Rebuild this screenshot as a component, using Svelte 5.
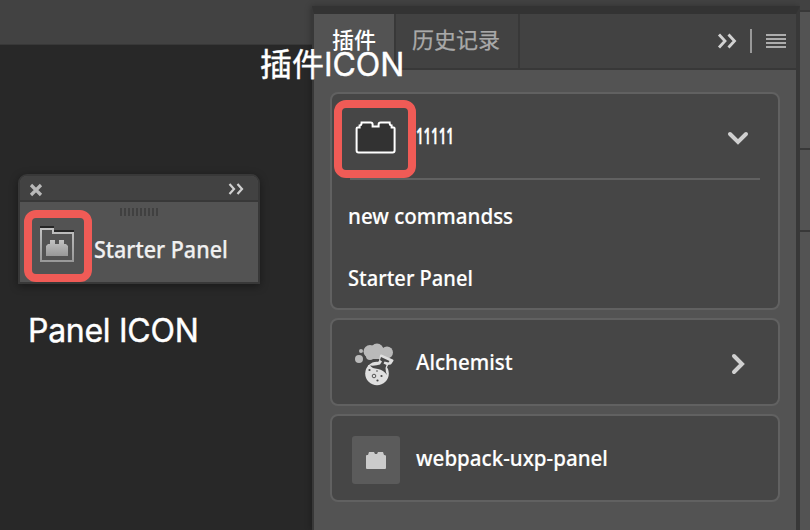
<script>
  const grips = Array.from({ length: 10 });
</script>

<main class="workspace">
  <header class="options-bar"></header>

  <section class="floating">
    <div class="float-head">
      <svg width="14" height="14" viewBox="0 0 14 14"><path d="M2 2l10 10M12 2L2 12" stroke="#b9b9b9" stroke-width="3.2" fill="none" /></svg>
      <svg width="16" height="12" viewBox="0 0 16 12"><path d="M1.5 1l4.5 5-4.500 5M9.500 1l4.500 5-4.500 5" stroke="#d0d0d0" stroke-width="2.200" fill="none" /></svg>
    </div>
    <div class="float-body">
      <div class="grip">{#each grips as _}<i></i>{/each}</div>
      <div class="float-row">
        <svg width="34" height="38" viewBox="0 0 34 38">
          <defs><linearGradient id="metal" x1="0" y1="0" x2="0" y2="1"><stop offset="0" stop-color="#c2c2c2" /><stop offset="1" stop-color="#989898" /></linearGradient></defs>
          <path d="M0 1h14M14 5h20" stroke="#262626" stroke-width="2" />
          <path d="M0 2H14V6H34V36H0ZM2 4V34H32V8H12V4Z" fill="url(#metal)" fill-rule="evenodd" />
          <path d="M6 20l2-2h2v-4h5v4h4v-4h5v4h2l2 2v10H6z" fill="url(#metal)" />
        </svg>
        <span class="float-label">Starter Panel</span>
      </div>
    </div>
  </section>

  <section class="dock">
    <div class="tabs">
      <div class="tab active"><span>插件</span></div>
      <div class="tab history"><span>历史记录</span></div>
      <div class="tools">
        <svg width="20" height="16" viewBox="0 0 20 16"><path d="M2 1.500l6 6.500-6 6.500M11.500 1.500l6 6.500-6 6.500" stroke="#d2d2d2" stroke-width="2.800" fill="none" /></svg>
        <b></b>
        <svg width="20" height="14" viewBox="0 0 20 14"><path d="M0 1h20M0 5h20M0 9h20M0 13h20" stroke="#adadad" stroke-width="2" /></svg>
      </div>
    </div>
    <div class="cards">
      <article class="card expanded">
        <div class="row first">
          <svg class="icon" width="48" height="48" viewBox="0 0 48 48"><path d="M4 11.500q0-1 1-1h2v-2q2 0 2-3h9q2 0 2 2v2h6v-2q0-2 2-2h9q0 3 2 3v2h2q1 0 1 1v22q0 2-2 2H6q-2 0-2-2z" transform="translate(.6 0)" fill="#323232" stroke="#fff" stroke-width="2" /></svg>
          <span class="label ones">11111</span>
          <svg class="arrow" width="24" height="24" viewBox="0 0 24 24"><path d="M4 8l8 8 8-8" /></svg>
        </div>
        <div class="command"><span class="label new">new commandss</span></div>
        <div class="command"><span class="label starter">Starter Panel</span></div>
      </article>
      <article class="card">
        <div class="row">
          <svg class="icon" width="48" height="48" viewBox="0 0 48 48">
            <g fill="#bababa"><circle cx="7" cy="19" r="4" /><circle cx="9" cy="11" r="2" /><circle cx="18" cy="11.500" r="6.500" /><circle cx="25" cy="10" r="6.500" /><circle cx="35" cy="12.500" r="6" /><path d="M12 13h28l-10 6H16z" /><circle cx="18" cy="16" r="4" /></g>
            <circle cx="25" cy="33.500" r="11.800" fill="#dfdfdf" />
            <path d="M29 15.500l11.500 5-2 3-3 .5-3 6-3.500 8-12-12 8-1 3-4z" fill="#dfdfdf" stroke="#dfdfdf" stroke-width="2" stroke-linejoin="round" />
            <path d="M29 17l8.500 4-1 1.500-4-1-1 2 3 1.500-1 3q0 4 1.500 7-3.500-5-9-6-6-.5-8-3.500 6 .500 10-1l2-3-2-1.500z" fill="#464646" />
            <circle cx="22" cy="36" r="1.800" fill="none" stroke="#555" />
            <g fill="#464646"><circle cx="17.500" cy="30" r="1.100" /><circle cx="25" cy="31" r=".8" /><circle cx="29.500" cy="36" r="1.100" /><circle cx="25.500" cy="40.500" r="1.100" /></g>
          </svg>
          <span class="label alchemist">Alchemist</span>
          <svg class="arrow" width="24" height="24" viewBox="0 0 24 24"><path d="M8 4l8 8-8 8" /></svg>
        </div>
      </article>
      <article class="card">
        <div class="row">
          <svg class="icon" width="48" height="48" viewBox="0 0 48 48"><rect width="48" height="48" rx="3" fill="#5b5b5b" /><path d="M14 20q0-1 1-1h1l1-3h5l1 2h2l1-2h5l1 3q2 0 2 1v12q0 1-1 1H15q-1 0-1-1z" fill="#cbcbcb" /></svg>
          <span class="label webpack">webpack-uxp-panel</span>
        </div>
      </article>
    </div>
  </section>

  <aside class="edge"><div class="edge-head"></div><div class="edge-one"></div><div class="edge-two"></div></aside>

  <div class="highlight small"></div>
  <div class="highlight large"></div>
  <span class="note panel-note">Panel ICON</span>
  <span class="note plugin-note">插件<em>ICON</em></span>
</main>

<style>
  :global(body) { margin: 0; }
  .workspace { position: relative; width: 810px; height: 530px; overflow: hidden; background: #282828; font-family: "Noto Sans", "Noto Sans CJK SC", sans-serif; color: #fff; }
  .workspace * { box-sizing: border-box; }
  svg { display: block; flex: none; }
  span { white-space: nowrap; }
  .options-bar { height: 45px; background: #424242; border-bottom: 1px solid #383838; }
  .floating { position: absolute; left: 18px; top: 174px; width: 242px; height: 110px; border: 2px solid #383838; border-radius: 9px 9px 0 0; background: #535353; box-shadow: 0 2px 8px #0006; overflow: hidden; }
  .float-head { height: 26px; display: flex; justify-content: space-between; padding: 7px 14px 0 9px; background: #424242; border-bottom: 2px solid #383838; }
  .float-body { padding-top: 6px; }
  .grip { display: flex; gap: 2px; width: 38px; height: 8px; margin-left: 100px; }
  .grip i { width: 2px; background: #404040; }
  .float-row { display: flex; padding: 10px 0 0 20px; }
  .float-label { margin: 7px 0 0 20px; font: 500 23px/32px "Noto Sans", sans-serif; color: #f0f0f0; -webkit-text-stroke: .25px #f0f0f0; transform: scaleX(.935); transform-origin: left; }
  .dock { position: absolute; left: 312px; top: 6px; width: 488px; height: 524px; display: flex; flex-direction: column; border-top: 8px solid #333; border-left: 2px solid #383838; border-right: 4px solid #383838; background: #535353; box-shadow: -1px 0 6px #0004; }
  .tabs { display: flex; height: 56px; flex: none; background: #424242; }
  .tab { display: flex; justify-content: center; border-right: 2px solid #383838; border-bottom: 2px solid #383838; font: 500 22px/49px "Noto Sans CJK SC", sans-serif; }
  .active { width: 82px; background: #535353; border-bottom-color: #535353; }
  .history { width: 124px; padding-right: 2px; color: #a9a9a9; font-weight: 400; -webkit-text-stroke: .25px #a9a9a9; }
  .tools { flex: 1; display: flex; align-items: center; justify-content: flex-end; padding-right: 10px; border-bottom: 2px solid #383838; }
  .tools b { width: 2px; height: 24px; background: #999; margin: 0 14px 0 13px; }
  .cards { display: flex; flex-direction: column; gap: 8px; padding: 22px 16px 0; }
  .card { height: 88px; border: 2px solid #616161; border-radius: 8px; background: #464646; }
  .expanded { height: 218px; }
  .row { height: 84px; margin: 0 18px; display: flex; align-items: center; padding-right: 10px; }
  .icon { margin: 4px 16px 0 2px; }
  .first { height: 86px; border-bottom: 2px solid #616161; }
  .first .icon { margin-top: 9px; }
  .arrow { margin-left: auto; margin-top: 4px; }
  .arrow path { fill: none; stroke: #d0d0d0; stroke-width: 4; stroke-linecap: round; }
  .label { display: block; font-size: 22px; font-weight: 500; line-height: 30px; -webkit-text-stroke: .15px #fff; transform: scaleX(.934); transform-origin: left; }
  .row .label { margin-bottom: 2px; }
  .ones { transform: scaleX(.6); font-weight: 600; -webkit-text-stroke: .35px #fff; }
  .starter { transform: scaleX(.912); }
  .command { padding: 20px 16px 0; height: 62px; }
  .note { position: absolute; font: 400 32px/40px Inter, "Noto Sans CJK SC", sans-serif; -webkit-text-stroke: .4px #fff; }
  .panel-note { left: 28px; top: 311px; letter-spacing: -.28px; }
  .plugin-note { left: 260px; top: 45px; }
  .note em { font-style: normal; letter-spacing: -.1px; }
  .highlight { position: absolute; border: 8px solid #f05b56; border-radius: 12px; }
  .small { left: 24px; top: 210px; width: 68px; height: 72px; }
  .large { left: 334px; top: 100px; width: 82px; height: 78px; }
  .edge { position: absolute; left: 800px; top: 0; width: 10px; height: 530px; background: #535353; }
  .edge div { border-bottom: 2px solid #383838; }
  .edge-head { height: 12px; background: #424242; }
  .edge-one { height: 138px; }
  .edge-two { height: 82px; }
</style>
